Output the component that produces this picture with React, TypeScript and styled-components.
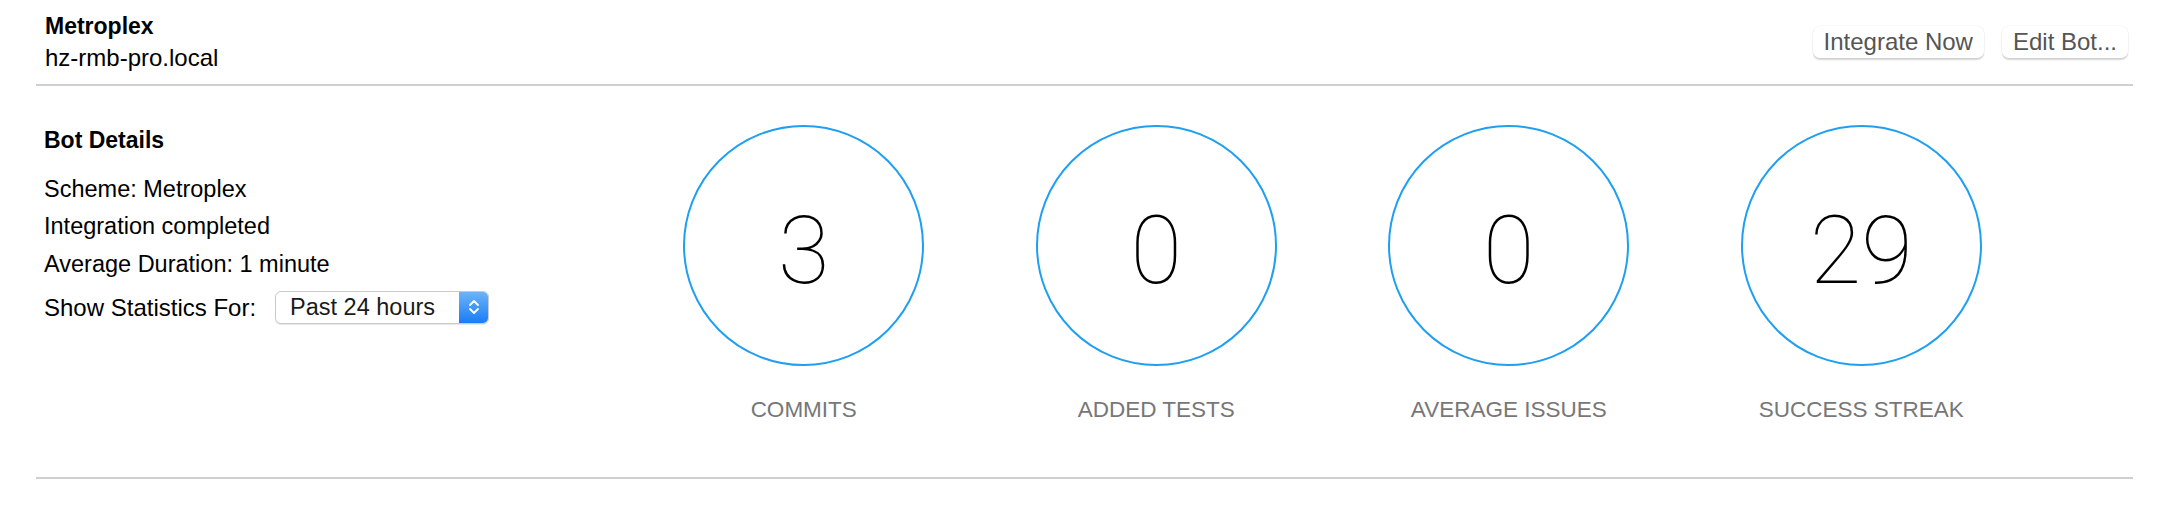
import React from "react";
import styled, { createGlobalStyle } from "styled-components";

const Global = createGlobalStyle`
  html, body { margin: 0; padding: 0; background: #fff; }
  body {
    font-family: "Liberation Sans", Arial, Helvetica, sans-serif;
    color: #000;
    -webkit-font-smoothing: antialiased;
  }
`;

const Page = styled.div`
  padding: 0 37px 0 36px;
`;

const Header = styled.header`
  display: flex;
  justify-content: space-between;
  align-items: flex-start;
  height: 84px;
  box-sizing: content-box;
  padding: 0 5px 0 9px;
  border-bottom: 2px solid #cfcfcf;
`;

const TitleBlock = styled.div`
  padding-top: 10px;
  display: flex;
  flex-direction: column;
`;

const Title = styled.div`
  font-size: 23px;
  font-weight: 700;
  line-height: 32px;
`;

const Host = styled.div`
  font-size: 24px;
  line-height: 32px;
`;

const Actions = styled.div`
  display: flex;
  gap: 18px;
  margin-top: 26px;
`;

const Button = styled.button`
  height: 32px;
  padding: 0 11px;
  border: none;
  border-radius: 7px;
  background: #fff;
  font-family: inherit;
  font-size: 24px;
  line-height: 32px;
  color: #555;
  box-shadow: 0 1.5px 1.5px rgba(0, 0, 0, 0.16), 0 0 0 0.5px rgba(0, 0, 0, 0.04);
  cursor: default;
`;

const Body = styled.section`
  display: flex;
  padding: 39px 0 52px 8px;
  border-bottom: 2px solid #cfcfcf;
`;

const Details = styled.div`
  width: 583.5px;
  flex: none;
`;

const Heading = styled.div`
  font-size: 23px;
  font-weight: 700;
  line-height: 30px;
  margin-bottom: 15.5px;
`;

const Line = styled.div`
  font-size: 23.5px;
  line-height: 37.5px;
`;

const StatsRow = styled.div`
  display: flex;
  align-items: center;
  gap: 19px;
  height: 33px;
  margin-top: 7.5px;
  font-size: 24px;
  line-height: 33px;
`;

const Select = styled.div`
  display: flex;
  width: 214px;
  height: 33px;
  box-sizing: border-box;
  border: 1px solid #cacaca;
  border-radius: 6px;
  overflow: hidden;
  background: #fff;
  box-shadow: 0 1px 1px rgba(0, 0, 0, 0.1);
`;

const SelectText = styled.span`
  flex: 1;
  padding-left: 14px;
  font-size: 23.5px;
  line-height: 31px;
  color: #1a1a1a;
`;

const SelectArrow = styled.span`
  width: 29px;
  display: flex;
  align-items: center;
  justify-content: center;
  background: linear-gradient(#6cb4fb, #1a7cf5);
`;

const Stats = styled.div`
  display: grid;
  grid-template-columns: repeat(4, 352.5px);
`;

const Stat = styled.div`
  display: flex;
  flex-direction: column;
  align-items: center;
`;

const Ring = styled.div`
  width: 241px;
  height: 241px;
  box-sizing: border-box;
  border: 2px solid #1e9ff2;
  border-radius: 50%;
  display: flex;
  align-items: center;
  justify-content: center;
`;

const Value = styled.div`
  font-family: Roboto, "Noto Sans", sans-serif;
  font-weight: 100;
  font-size: 94px;
  line-height: 1;
  padding-top: 10px;
  color: #000;
`;

const StatLabel = styled.div`
  margin-top: 28.6px;
  font-size: 22.5px;
  line-height: 30px;
  color: #777;
`;

const stats = [
  { value: "3", label: "COMMITS" },
  { value: "0", label: "ADDED TESTS" },
  { value: "0", label: "AVERAGE ISSUES" },
  { value: "29", label: "SUCCESS STREAK" },
];

const Chevrons = () => (
  <svg width="12" height="18" viewBox="0 0 12 18" fill="none">
    <path d="M2 7 L6 3 L10 7" stroke="#fff" strokeWidth="1.8" strokeLinecap="round" strokeLinejoin="round" />
    <path d="M2 11 L6 15 L10 11" stroke="#fff" strokeWidth="1.8" strokeLinecap="round" strokeLinejoin="round" />
  </svg>
);

export default function App() {
  return (
    <Page>
      <Global />
      <Header>
        <TitleBlock>
          <Title>Metroplex</Title>
          <Host>hz-rmb-pro.local</Host>
        </TitleBlock>
        <Actions>
          <Button>Integrate Now</Button>
          <Button>Edit Bot...</Button>
        </Actions>
      </Header>
      <Body>
        <Details>
          <Heading>Bot Details</Heading>
          <Line>Scheme: Metroplex</Line>
          <Line>Integration completed</Line>
          <Line>Average Duration: 1 minute</Line>
          <StatsRow>
            <span>Show Statistics For:</span>
            <Select>
              <SelectText>Past 24 hours</SelectText>
              <SelectArrow>
                <Chevrons />
              </SelectArrow>
            </Select>
          </StatsRow>
        </Details>
        <Stats>
          {stats.map((s) => (
            <Stat key={s.label}>
              <Ring>
                <Value>{s.value}</Value>
              </Ring>
              <StatLabel>{s.label}</StatLabel>
            </Stat>
          ))}
        </Stats>
      </Body>
    </Page>
  );
}
